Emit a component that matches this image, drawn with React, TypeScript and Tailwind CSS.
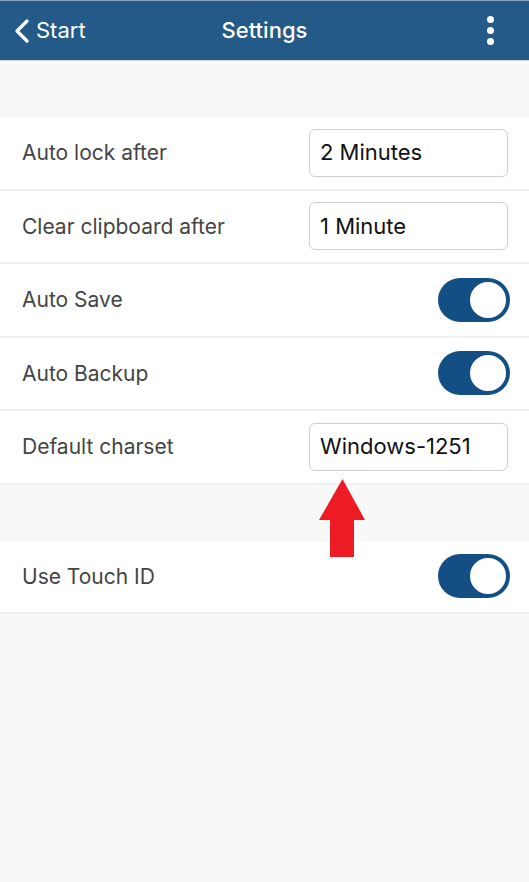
import { ChevronLeft } from "lucide-react";

type Row =
  | { label: string; kind: "input"; value: string }
  | { label: string; kind: "toggle" };

const groupOne: Row[] = [
  { label: "Auto lock after", kind: "input", value: "2 Minutes" },
  { label: "Clear clipboard after", kind: "input", value: "1 Minute" },
  { label: "Auto Save", kind: "toggle" },
  { label: "Auto Backup", kind: "toggle" },
  { label: "Default charset", kind: "input", value: "Windows-1251" },
];

const groupTwo: Row[] = [{ label: "Use Touch ID", kind: "toggle" }];

const Toggle = () => (
  <div className="w-[72px] h-[44px] -mr-[2px] rounded-full bg-[#134f84] flex items-center justify-end pr-[2px]">
    <div className="w-[40px] h-[40px] rounded-full bg-white border-2 border-[#134f84]" />
  </div>
);

const SettingRow = ({ row }: { row: Row }) => (
  <div className="h-[73.5px] bg-white border-b-2 border-[#efefef] flex items-center justify-between pl-[22px] pr-[21px]">
    <span className="text-[21px] text-[#444]">{row.label}</span>
    {row.kind === "input" ? (
      <div className="w-[199px] h-[48px] rounded-[6px] border border-[#cfcfcf] flex items-center pl-[10px] text-[22px] text-[#111]">
        {row.value}
      </div>
    ) : (
      <Toggle />
    )}
  </div>
);

export default function App() {
  return (
    <div
      className="w-[529px] h-[882px] bg-[#f8f8f8] relative"
      style={{ fontFamily: "Inter, 'Liberation Sans', sans-serif" }}
    >
      <div className="h-[61px] bg-[#245a88] border-t border-[#8aa3bd] border-b border-b-[#d6d6d6] flex items-center justify-between px-[8px] text-white">
        <div className="flex items-center w-[120px]">
          <ChevronLeft size={40} strokeWidth={2} className="-ml-[6px]" />
          <span className="text-[22px] -ml-[6px]">Start</span>
        </div>
        <span className="text-[22px] font-medium">Settings</span>
        <div className="w-[120px] flex justify-end pr-[27px]">
          <div className="flex flex-col gap-[4px]">
            <div className="w-[7px] h-[7px] rounded-full bg-white" />
            <div className="w-[7px] h-[7px] rounded-full bg-white" />
            <div className="w-[7px] h-[7px] rounded-full bg-white" />
          </div>
        </div>
      </div>

      <div className="pt-[56px] flex flex-col">
        {groupOne.map((row) => (
          <SettingRow key={row.label} row={row} />
        ))}
      </div>

      <div className="pt-[56px] flex flex-col">
        {groupTwo.map((row) => (
          <SettingRow key={row.label} row={row} />
        ))}
      </div>

      {/* red pointer arrow over the charset field */}
      <svg
        className="absolute left-[319px] top-[479px]"
        width="47"
        height="80"
        viewBox="0 0 47 80"
      >
        <path d="M23.5 0 L46 41 L35 41 L35 78 L11 78 L11 41 L0 41 Z" fill="#ed1c24" />
      </svg>
    </div>
  );
}
